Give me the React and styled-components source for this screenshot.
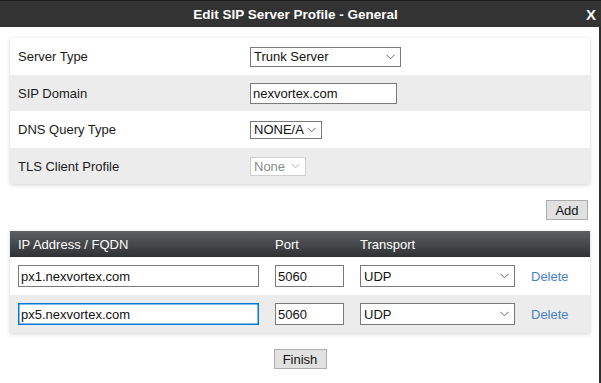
// Packages
import React from 'react'
import styled, { createGlobalStyle } from 'styled-components'

const GlobalStyle = createGlobalStyle`
  html, body {
    margin: 0;
    padding: 0;
    background: #ffffff;
  }
  body {
    font-family: "Liberation Sans", Arial, sans-serif;
    font-size: 13px;
    color: #1a1a1a;
  }
`

const Modal = styled.div`
  width: 601px;
  height: 383px;
  box-sizing: border-box;
  background: #ffffff;
  border-right: 2px solid #2e2e2e;
  display: flex;
  flex-direction: column;
`

const TitleBar = styled.div`
  height: 27px;
  flex-shrink: 0;
  background: #333333;
  border-top: 1px solid #1c1c1c;
  box-sizing: border-box;
  margin-right: -2px;
  padding-right: 10px;
  position: relative;
  display: flex;
  align-items: center;
  justify-content: center;
  color: #ffffff;
  font-weight: bold;
  font-size: 13.5px;
`

const Close = styled.span`
  position: absolute;
  right: 5px;
  top: 5px;
  font-size: 15px;
  font-weight: bold;
`

const Body = styled.div`
  padding: 11px 9px 0 10px;
  display: flex;
  flex-direction: column;
`

const Card = styled.div`
  background: #ffffff;
  box-shadow: 0 1px 4px rgba(0, 0, 0, 0.18);
`

const FieldRow = styled.div`
  display: grid;
  grid-template-columns: 232px 1fr;
  align-items: center;
  height: ${p => p.$h}px;
  padding-left: 8px;
  background: ${p => (p.$shade ? '#ececec' : '#ffffff')};
`

const Label = styled.span`
  font-size: 13px;
  color: #1a1a1a;
`

const SelectBox = styled.div`
  position: relative;
  box-sizing: border-box;
  width: ${p => p.$w}px;
  height: ${p => p.$h}px;
  border: 1px solid ${p => (p.$disabled ? '#cfcfcf' : '#7a7a7a')};
  background: #ffffff;
  color: ${p => (p.$disabled ? '#8a8a8a' : '#111111')};
  font-size: 13px;
  display: flex;
  align-items: center;
  padding-left: 3px;
`

const Chevron = styled.svg`
  position: absolute;
  right: 5px;
  top: 50%;
  margin-top: -3px;
`

const TextBox = styled.div`
  box-sizing: border-box;
  width: ${p => p.$w}px;
  height: ${p => p.$h}px;
  border: 1px solid ${p => (p.$focus ? '#0078d7' : '#7a7a7a')};
  box-shadow: ${p => (p.$focus ? 'inset 0 0 0 0.5px #0078d7' : 'none')};
  background: #ffffff;
  color: #111111;
  font-size: 13px;
  display: flex;
  align-items: center;
  padding-left: 2px;
`

const Button = styled.div`
  box-sizing: border-box;
  height: 20px;
  width: ${p => p.$w}px;
  background: #e1e1e1;
  border: 1px solid #adadad;
  color: #111111;
  font-size: 13px;
  display: flex;
  align-items: center;
  justify-content: center;
`

const AddBar = styled.div`
  display: flex;
  justify-content: flex-end;
  padding-right: 2px;
  margin: 16px 0 11px;
`

const TableHead = styled.div`
  display: grid;
  grid-template-columns: 257px 85px 171px 1fr;
  align-items: center;
  height: 26px;
  padding-left: 8px;
  color: #ffffff;
  font-size: 13px;
  background: linear-gradient(#5d6063, #2f3133);
`

const TableRow = styled.div`
  display: grid;
  grid-template-columns: 257px 85px 171px 1fr;
  align-items: center;
  height: 38px;
  padding-left: 8px;
  background: ${p => (p.$shade ? '#ececec' : '#ffffff')};
`

const DeleteLink = styled.span`
  color: #4a7fc6;
  font-size: 13px;
`

const Footer = styled.div`
  display: flex;
  justify-content: center;
  margin-top: 16px;
`

const Select = ({ w, h, disabled, children }) => (
  <SelectBox $w={w} $h={h} $disabled={disabled}>
    {children}
    <Chevron width="9" height="6" viewBox="0 0 9 6">
      <path
        d="M0.5 0.8 L4.5 4.8 L8.5 0.8"
        fill="none"
        stroke={disabled ? '#b5b5b5' : '#6a6a6a'}
        strokeWidth="1"
      />
    </Chevron>
  </SelectBox>
)

const servers = [
  { host: 'px1.nexvortex.com', port: '5060', transport: 'UDP' },
  { host: 'px5.nexvortex.com', port: '5060', transport: 'UDP', focus: true }
]

const App = () => (
  <>
    <GlobalStyle />
    <Modal>
      <TitleBar>
        Edit SIP Server Profile - General
        <Close>X</Close>
      </TitleBar>
      <Body>
        <Card>
          <FieldRow $h={37}>
            <Label>Server Type</Label>
            <Select w={151} h={20}>Trunk Server</Select>
          </FieldRow>
          <FieldRow $h={36} $shade>
            <Label>SIP Domain</Label>
            <TextBox $w={147} $h={21}>nexvortex.com</TextBox>
          </FieldRow>
          <FieldRow $h={37}>
            <Label>DNS Query Type</Label>
            <Select w={72} h={18}>NONE/A</Select>
          </FieldRow>
          <FieldRow $h={36} $shade>
            <Label>TLS Client Profile</Label>
            <Select w={56} h={19} disabled>None</Select>
          </FieldRow>
        </Card>

        <AddBar>
          <Button $w={42}>Add</Button>
        </AddBar>

        <Card>
          <TableHead>
            <span>IP Address / FQDN</span>
            <span>Port</span>
            <span>Transport</span>
          </TableHead>
          {servers.map((s, i) => (
            <TableRow key={s.host} $shade={i % 2 === 1}>
              <TextBox $w={241} $h={22} $focus={s.focus}>{s.host}</TextBox>
              <TextBox $w={69} $h={22}>{s.port}</TextBox>
              <Select w={155} h={22}>{s.transport}</Select>
              <DeleteLink>Delete</DeleteLink>
            </TableRow>
          ))}
        </Card>

        <Footer>
          <Button $w={53}>Finish</Button>
        </Footer>
      </Body>
    </Modal>
  </>
)

export default App
